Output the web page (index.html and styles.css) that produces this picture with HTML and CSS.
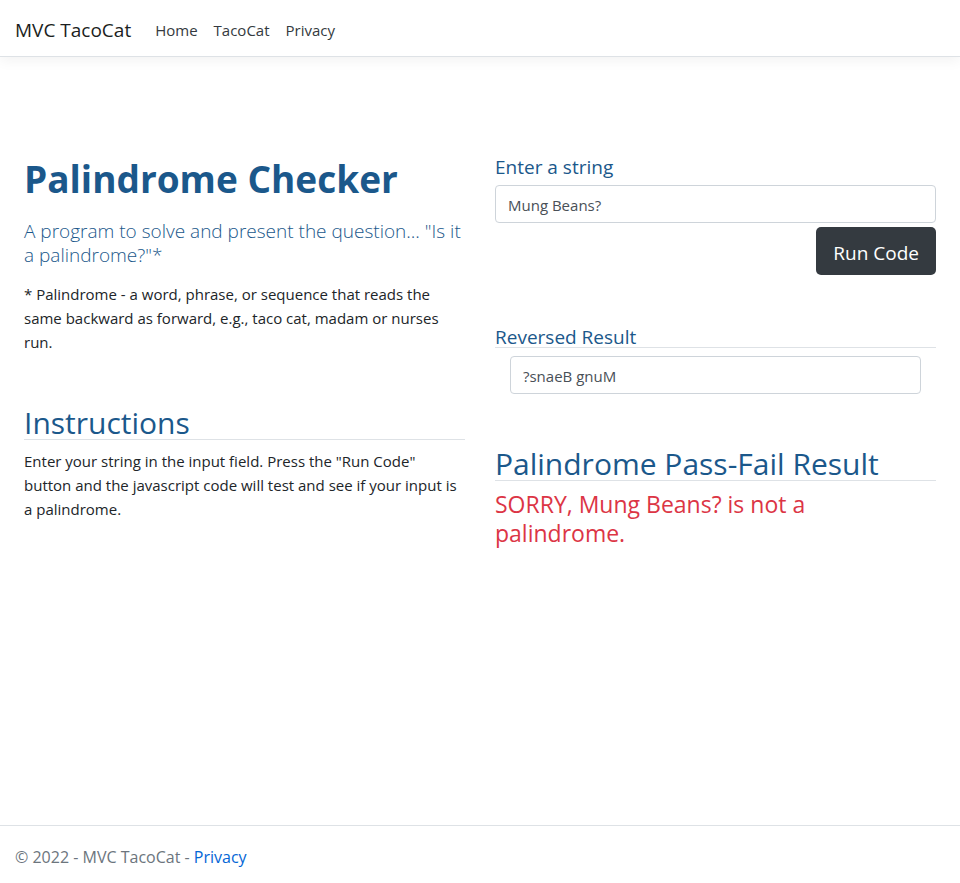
FILE: index.html
```html
<!DOCTYPE html>
<html lang="en">
<head>
  <meta charset="utf-8">
  <meta name="viewport" content="width=device-width, initial-scale=1">
  <title>MVC TacoCat</title>
  <link rel="stylesheet" href="styles.css">
</head>
<body>
  <header class="site-header">
    <a class="brand" href="#">MVC TacoCat</a>
    <nav class="nav">
      <a href="#">Home</a>
      <a href="#">TacoCat</a>
      <a href="#">Privacy</a>
    </nav>
  </header>

  <main class="main">
    <div class="column">
      <section>
        <h1 class="title">Palindrome Checker</h1>
        <p class="lead">A program to solve and present the question... "Is it a palindrome?"*</p>
        <p class="text">* Palindrome - a word, phrase, or sequence that reads the same backward as forward, e.g., taco cat, madam or nurses run.</p>
      </section>
      <section class="instructions">
        <h2 class="heading">Instructions</h2>
        <p class="text">Enter your string in the input field. Press the "Run Code" button and the javascript code will test and see if your input is a palindrome.</p>
      </section>
    </div>

    <div class="column">
      <form class="entry">
        <label class="label" for="entry">Enter a string</label>
        <input class="field" id="entry" type="text" value="Mung Beans?">
        <button class="button" type="button">Run Code</button>
      </form>
      <section class="reversed">
        <label class="label ruled" for="reversed">Reversed Result</label>
        <div class="inset">
          <input class="field" id="reversed" type="text" value="?snaeB gnuM" readonly>
        </div>
      </section>
      <section class="verdict">
        <h2 class="heading">Palindrome Pass-Fail Result</h2>
        <p class="message">SORRY, Mung Beans? is not a palindrome.</p>
      </section>
    </div>
  </main>

  <footer class="site-footer">&copy; 2022 - MVC TacoCat - <a href="#">Privacy</a></footer>
</body>
</html>
```
FILE: styles.css
```css
* {
  box-sizing: border-box;
}

body {
  display: flex;
  flex-direction: column;
  min-height: 100vh;
  margin: 0;
  background: #fff;
  color: #212529;
  font: 15px/24px "Open Sans", "Noto Sans", sans-serif;
}

h1,
h2,
p {
  margin: 0;
}

a {
  text-decoration: none;
}

.site-header {
  display: flex;
  align-items: center;
  gap: 24px;
  padding: 10px 15px 6px;
  border-bottom: 1px solid #dee2e6;
  box-shadow: 0 4px 12px rgba(0, 0, 0, 0.05);
}

.brand {
  color: #1b1e21;
  font-size: 19px;
  line-height: 40px;
}

.nav {
  display: flex;
  gap: 16px;
}

.nav a {
  color: #343a40;
}

.main {
  flex: 1;
  display: grid;
  grid-template-columns: repeat(auto-fit, minmax(300px, 1fr));
  align-items: start;
  gap: 30px;
  padding: 98px 24px 48px;
}

.title {
  margin-bottom: 16px;
  color: #1b588b;
  font-size: 37px;
  font-weight: 700;
  line-height: 48px;
}

.lead {
  margin-bottom: 15px;
  color: #1b588b;
  font-size: 19px;
  font-weight: 300;
}

.instructions {
  margin-top: 53px;
}

.heading {
  margin-bottom: 9px;
  border-bottom: 1px solid #dee2e6;
  color: #1b588b;
  font-size: 30px;
  font-weight: 400;
  line-height: 32px;
}

.entry {
  display: flex;
  flex-direction: column;
}

.label {
  display: block;
  margin-bottom: 6px;
  color: #1b588b;
  font-size: 19px;
}

.ruled {
  margin-bottom: 8px;
  border-bottom: 1px solid #dee2e6;
  line-height: 20px;
}

.field {
  display: block;
  width: 100%;
  height: 38px;
  padding: 8px 12px 6px;
  border: 1px solid #ced4da;
  border-radius: 4px;
  background: #fff;
  color: #495057;
  font: inherit;
}

.button {
  align-self: flex-end;
  height: 48px;
  margin-top: 4px;
  padding: 3px 17px 0;
  border: 0;
  border-radius: 5px;
  background: #343a40;
  color: #fff;
  font: inherit;
  font-size: 19px;
}

.reversed {
  margin-top: 52px;
}

.inset {
  padding: 0 15px;
}

.verdict {
  margin-top: 54px;
}

.message {
  color: #dc3545;
  font-size: 23px;
  line-height: 29px;
}

.site-footer {
  padding: 19px 15px 14px;
  border-top: 1px solid #dee2e6;
  color: #6c757d;
  font-size: 16px;
}

.site-footer a {
  color: #0366d6;
}
```
